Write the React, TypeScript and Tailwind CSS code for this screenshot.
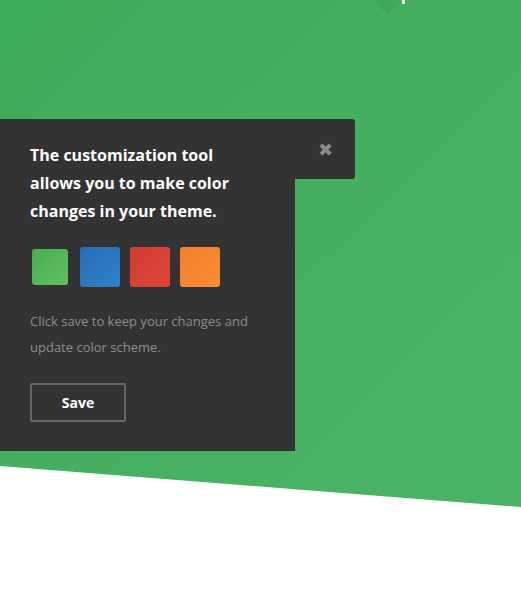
const swatches = [
  { name: 'green', cls: 'mx-[2px] w-9 h-9 bg-gradient-to-br from-[#47ad52] to-[#61c05f]' },
  { name: 'blue', cls: 'w-10 h-10 bg-gradient-to-br from-[#2a6cb6] to-[#2f82ca]' },
  { name: 'red', cls: 'w-10 h-10 bg-gradient-to-br from-[#d03e32] to-[#de4538]' },
  { name: 'orange', cls: 'w-10 h-10 bg-gradient-to-br from-[#f4802f] to-[#f98c33]' },
]

export default function App() {
  return (
    <div className="relative h-[599px] w-full overflow-hidden bg-white font-['Open_Sans',sans-serif]">
      {/* green header band with slanted bottom edge */}
      <div className="absolute inset-x-0 top-0 h-[510px] bg-gradient-to-br from-[#3fac5a] to-[#4bb366] [clip-path:polygon(0_0,100%_0,100%_507px,0_466px)]">
        <div className="absolute left-[372px] top-[-24px] h-8 w-8 rotate-45 bg-gradient-to-b from-transparent to-[#3a9f52]/60" />
        <div className="absolute left-[402px] top-0 h-1 w-[3px] bg-white" />
      </div>

      <div className="relative flex pt-[119px]">
        <div className="w-[295px] bg-[#333333] pb-[29px] pl-[30px] pr-[25px] pt-[22px]">
          <h2 className="w-[220px] text-[16px] font-bold leading-[28px] text-white">
            The customization tool allows you to make color changes in your theme.
          </h2>
          <div className="mt-[22px] flex items-center gap-[10px]">
            {swatches.map(s => (
              <button key={s.name} className={`${s.cls} rounded-[3px]`} />
            ))}
          </div>
          <p className="mt-[21px] text-[13px] leading-[26px] text-[#8c8c8c]">
            Click save to keep your changes and update color scheme.
          </p>
          <button className="mt-[23px] h-[39px] w-[96px] rounded-[2px] border-2 border-[#666666] text-[14px] font-bold leading-none text-white">
            Save
          </button>
        </div>
        <div className="flex h-[60px] w-[60px] items-center justify-center rounded-r-[3px] bg-[#333333]">
          <span className="text-[18px] leading-none text-[#8a8a8a]">✖</span>
        </div>
      </div>
    </div>
  )
}
